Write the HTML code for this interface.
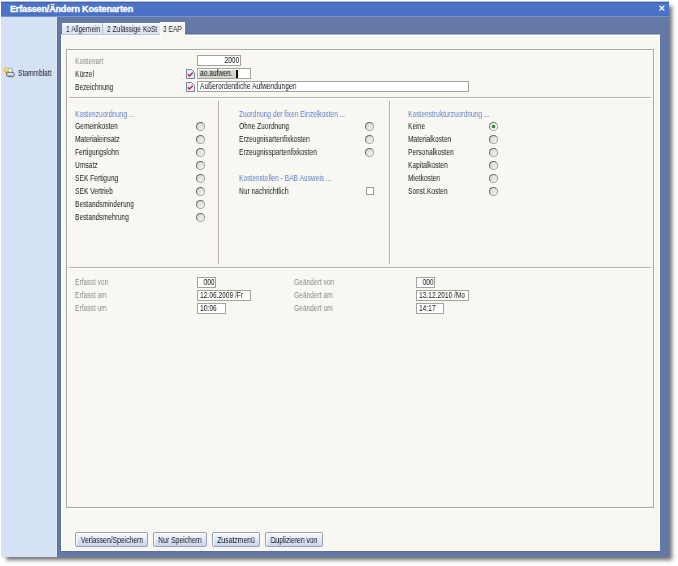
<!DOCTYPE html>
<html><head><meta charset="utf-8">
<style>
*{margin:0;padding:0;box-sizing:border-box}
html,body{width:678px;height:566px;overflow:hidden;background:#fff;position:relative;font-family:"Liberation Sans",sans-serif}
.a{position:absolute}
.t{position:absolute;font-size:8.2px;white-space:nowrap;color:#1a1a1a;line-height:9px;transform:scaleX(0.81);transform-origin:0 0}
.g{color:#8a8a88}
.h{color:#6080c8}
.box{position:absolute;background:#fff;border:1px solid #a4a29a;height:11px}
.bt{position:absolute;font-size:8.2px;white-space:nowrap;color:#111;line-height:9px;top:0px;transform:scaleX(0.81);transform-origin:0 0}
.r{position:absolute;width:9px;height:9px;border-radius:50%;border:1px solid;border-color:#6a6a68 #9a9a96 #a8a8a4 #6a6a68;background:linear-gradient(135deg,#d4d4d0,#f6f6f4)}
.sel{background:#fff}.sel::after{content:"";position:absolute;left:2px;top:2px;width:3px;height:3px;border-radius:50%;background:#2c8a30;box-shadow:0 0 0 0.5px #5aa85a}
.btn{position:absolute;top:532px;height:15px;border:1px solid #9a9ea6;border-radius:2px;background:linear-gradient(#f4f8fe,#dfe9f9 50%,#c6d6f1);box-shadow:inset 1px 1px 0 #fff;color:#111;white-space:nowrap}
.btn span{position:absolute;left:50%;top:3px;font-size:8.2px;line-height:10px;transform:translateX(-50%) scaleX(0.83)}
u{text-underline-offset:-1px}
.t,.bt,.btn span{will-change:transform}
</style></head><body>
<!-- window + shadow -->
<div class="a" style="left:1px;top:1px;width:668px;height:556px;background:#6479a6;box-shadow:4px 4px 4px -1px rgba(0,0,0,0.56)"></div>
<!-- title bar -->
<div class="a" style="left:1px;top:1px;width:668px;height:15px;background:linear-gradient(#b4c2e6 0,#b4c2e6 1px,#3d60b0 1px,#3d60b0 2px,#4c74c8 2px,#4870c4 15px)"></div>
<div class="a" style="left:1px;top:16px;width:668px;height:1px;background:#7c94ca"></div>
<div class="a" style="left:10px;top:4px;font-size:9px;letter-spacing:-0.15px;-webkit-text-stroke:0.35px #fff;font-weight:bold;color:#fff;white-space:nowrap;line-height:10px">Erfassen/Ändern Kostenarten</div>
<svg class="a" style="left:658px;top:4px" width="8" height="8" viewBox="0 0 8 8"><path d="M1.5 1.8L6.3 6.6M6.3 1.8L1.5 6.6" stroke="#f0f4ff" stroke-width="1.4"/></svg>
<!-- left panel -->
<div class="a" style="left:1px;top:17px;width:56px;height:540px;background:#d5e1f5;border-right:1px solid #e2eafa"></div>
<svg class="a" style="left:3px;top:66px" width="13" height="12" viewBox="0 0 13 12"><path d="M3.6 7.4Q4 6.2 6.5 6.3L10.3 6.6Q11.6 7 11.3 8.8L10.8 10.2Q10.3 10.9 8.6 10.8L5.2 10.6Q3.8 10.4 3.7 9.3Z" fill="#e2e2e4" stroke="#50545c" stroke-width="0.9"/><path d="M4.6 9.3L10.4 9.6" stroke="#9a9aa0" stroke-width="0.8"/><circle cx="7.3" cy="4.3" r="2.3" fill="#d6f0f0" stroke="#6a8c9a" stroke-width="0.7"/><circle cx="6.6" cy="3.8" r="0.9" fill="#fff"/><circle cx="3.2" cy="3.8" r="2.6" fill="#e8c040"/><circle cx="3.2" cy="3.6" r="1.4" fill="#f6e28a"/><path d="M3 6.2L3.3 7.6" stroke="#6a5030" stroke-width="1"/></svg>
<div class="t" style="left:18px;top:69px">Stammblatt</div>
<!-- frame dark line above page -->
<div class="a" style="left:61px;top:33px;width:599px;height:1px;background:#5a6c98"></div>
<!-- page -->
<div class="a" style="left:61px;top:34px;width:599px;height:517px;background:#f8f7f2;border-top:1px solid #aab6cc;border-left:1px solid #fff;box-shadow:inset 0 1px 0 #fff,inset 0 -1px 0 #fcfcfa,inset -1px 0 0 #fcfcfa,0 1px 0 #5a6e9c,-1px 0 0 #5a6e9c"></div>
<div class="a" style="left:57px;top:17px;width:1px;height:540px;background:#5c709c"></div>
<!-- tabs -->
<div class="a" style="left:62px;top:23px;width:40px;height:12px;background:linear-gradient(#ffffff,#e4ebf7 30%,#dbe4f4);border-bottom:1px solid #b9c3d8"></div>
<div class="a" style="left:102px;top:23px;width:58px;height:12px;background:linear-gradient(#ffffff,#e4ebf7 30%,#dbe4f4);border-left:1px solid #b0bcd8;border-bottom:1px solid #b9c3d8"></div>
<div class="a" style="left:160px;top:22px;width:25px;height:14px;background:#f8f7f2;border-left:1px solid #fff"></div>
<div class="t" style="left:66px;top:25px"><u>1</u> Allgemein</div>
<div class="t" style="left:107px;top:25px"><u>2</u> Zulässige KoSt</div>
<div class="t" style="left:163px;top:25px">3 EAP</div>
<!-- group box -->
<div class="a" style="left:66px;top:49px;width:588px;height:459px;border:1px solid #aaa89e;box-shadow:inset 1px 1px 0 #fff,1px 1px 0 #fff"></div>
<div class="a" style="left:69px;top:97px;width:582px;height:1px;background:#b4b2a8;box-shadow:0 1px 0 #fff"></div>
<div class="a" style="left:69px;top:267px;width:582px;height:1px;background:#b4b2a8;box-shadow:0 1px 0 #fff"></div>
<div class="a" style="left:218px;top:101px;width:1px;height:163px;background:#b4b2a8;box-shadow:1px 0 0 #fff"></div>
<div class="a" style="left:389px;top:101px;width:1px;height:163px;background:#b4b2a8;box-shadow:1px 0 0 #fff"></div>

<!-- header fields -->
<div class="t g" style="left:75px;top:57px">Kostenart</div>
<div class="t" style="left:75px;top:70px">Kürzel</div>
<div class="t" style="left:75px;top:83px">Bezeichnung</div>
<div class="box" style="left:197px;top:55px;width:44px"><div class="bt" style="right:1px;transform-origin:100% 0">2000</div></div>
<div class="box" style="left:197px;top:68px;width:54px"><div class="a" style="left:1px;top:1px;width:37px;height:8px;background:#d6d6ce"></div><div class="bt" style="left:2px">ao.aufwen.</div><div class="a" style="left:38px;top:1px;width:2px;height:8px;background:#111"></div></div>
<div class="box" style="left:197px;top:81px;width:272px"><div class="bt" style="left:2px">Außerordentliche Aufwendungen</div></div>
<svg class="a" style="left:186px;top:69px" width="9" height="10" viewBox="0 0 9 10"><path d="M0.5 0.5H5.5L8.5 3.5V9.5H0.5Z" fill="#e6eefb" stroke="#7684a4"/><path d="M1.8 5.3L3.4 7L6.8 3.6" fill="none" stroke="#c82c3c" stroke-width="1.5"/></svg>
<svg class="a" style="left:186px;top:82px" width="9" height="10" viewBox="0 0 9 10"><path d="M0.5 0.5H5.5L8.5 3.5V9.5H0.5Z" fill="#e6eefb" stroke="#7684a4"/><path d="M1.8 5.3L3.4 7L6.8 3.6" fill="none" stroke="#c82c3c" stroke-width="1.5"/></svg>

<!-- col 1 -->
<div class="t h" style="left:75px;top:110px">Kostenzuordnung ...</div>
<div class="t" style="left:75px;top:122px">Gemeinkosten</div>
<div class="t" style="left:75px;top:135px">Materialeinsatz</div>
<div class="t" style="left:75px;top:148px">Fertigungslohn</div>
<div class="t" style="left:75px;top:161px">Umsatz</div>
<div class="t" style="left:75px;top:174px">SEK Fertigung</div>
<div class="t" style="left:75px;top:187px">SEK Vertrieb</div>
<div class="t" style="left:75px;top:200px">Bestandsminderung</div>
<div class="t" style="left:75px;top:213px">Bestandsmehrung</div>
<div class="r" style="left:196px;top:122px"></div>
<div class="r" style="left:196px;top:135px"></div>
<div class="r" style="left:196px;top:148px"></div>
<div class="r" style="left:196px;top:161px"></div>
<div class="r" style="left:196px;top:174px"></div>
<div class="r" style="left:196px;top:187px"></div>
<div class="r" style="left:196px;top:200px"></div>
<div class="r" style="left:196px;top:213px"></div>

<!-- col 2 -->
<div class="t h" style="left:239px;top:110px">Zuordnung der fixen Einzelkosten ...</div>
<div class="t" style="left:239px;top:122px">Ohne Zuordnung</div>
<div class="t" style="left:239px;top:135px">Erzeugnisartenfixkosten</div>
<div class="t" style="left:239px;top:148px">Erzeugnisspartenfixkosten</div>
<div class="r" style="left:365px;top:122px"></div>
<div class="r" style="left:365px;top:135px"></div>
<div class="r" style="left:365px;top:148px"></div>
<div class="t h" style="left:239px;top:174px">Kostenstellen - BAB Ausweis ...</div>
<div class="t" style="left:239px;top:187px">Nur nachrichtlich</div>
<div class="a" style="left:366px;top:187px;width:8px;height:8px;border:1px solid #9c9c98;background:#fff"></div>

<!-- col 3 -->
<div class="t h" style="left:408px;top:110px">Kostenstrukturzuordnung ...</div>
<div class="t" style="left:408px;top:122px">Keine</div>
<div class="t" style="left:408px;top:135px">Materialkosten</div>
<div class="t" style="left:408px;top:148px">Personalkosten</div>
<div class="t" style="left:408px;top:161px">Kapitalkosten</div>
<div class="t" style="left:408px;top:174px">Mietkosten</div>
<div class="t" style="left:408px;top:187px">Sonst.Kosten</div>
<div class="r sel" style="left:489px;top:122px"></div>
<div class="r" style="left:489px;top:135px"></div>
<div class="r" style="left:489px;top:148px"></div>
<div class="r" style="left:489px;top:161px"></div>
<div class="r" style="left:489px;top:174px"></div>
<div class="r" style="left:489px;top:187px"></div>

<!-- bottom -->
<div class="t g" style="left:75px;top:278px">Erfasst von</div>
<div class="t g" style="left:75px;top:291px">Erfasst am</div>
<div class="t g" style="left:75px;top:304px">Erfasst um</div>
<div class="box" style="left:197px;top:277px;width:19px"><div class="bt" style="right:0px;transform-origin:100% 0">000</div></div>
<div class="box" style="left:197px;top:290px;width:54px"><div class="bt" style="left:2px">12.06.2009 /Fr</div></div>
<div class="box" style="left:197px;top:303px;width:29px"><div class="bt" style="left:2px">10:06</div></div>
<div class="t g" style="left:294px;top:278px">Geändert von</div>
<div class="t g" style="left:294px;top:291px">Geändert am</div>
<div class="t g" style="left:294px;top:304px">Geändert um</div>
<div class="box" style="left:416px;top:277px;width:19px"><div class="bt" style="right:0px;transform-origin:100% 0">000</div></div>
<div class="box" style="left:416px;top:290px;width:53px"><div class="bt" style="left:2px">13.12.2010 /Mo</div></div>
<div class="box" style="left:416px;top:303px;width:28px"><div class="bt" style="left:2px">14:17</div></div>

<!-- buttons -->
<div class="btn" style="left:75px;width:73px"><span>Verlassen/<u>S</u>peichern</span></div>
<div class="btn" style="left:153px;width:54px"><span><u>N</u>ur Speichern</span></div>
<div class="btn" style="left:212px;width:48px"><span>Zusatz<u>m</u>enü</span></div>
<div class="btn" style="left:265px;width:58px"><span><u>D</u>uplizieren von</span></div>
</body></html>
